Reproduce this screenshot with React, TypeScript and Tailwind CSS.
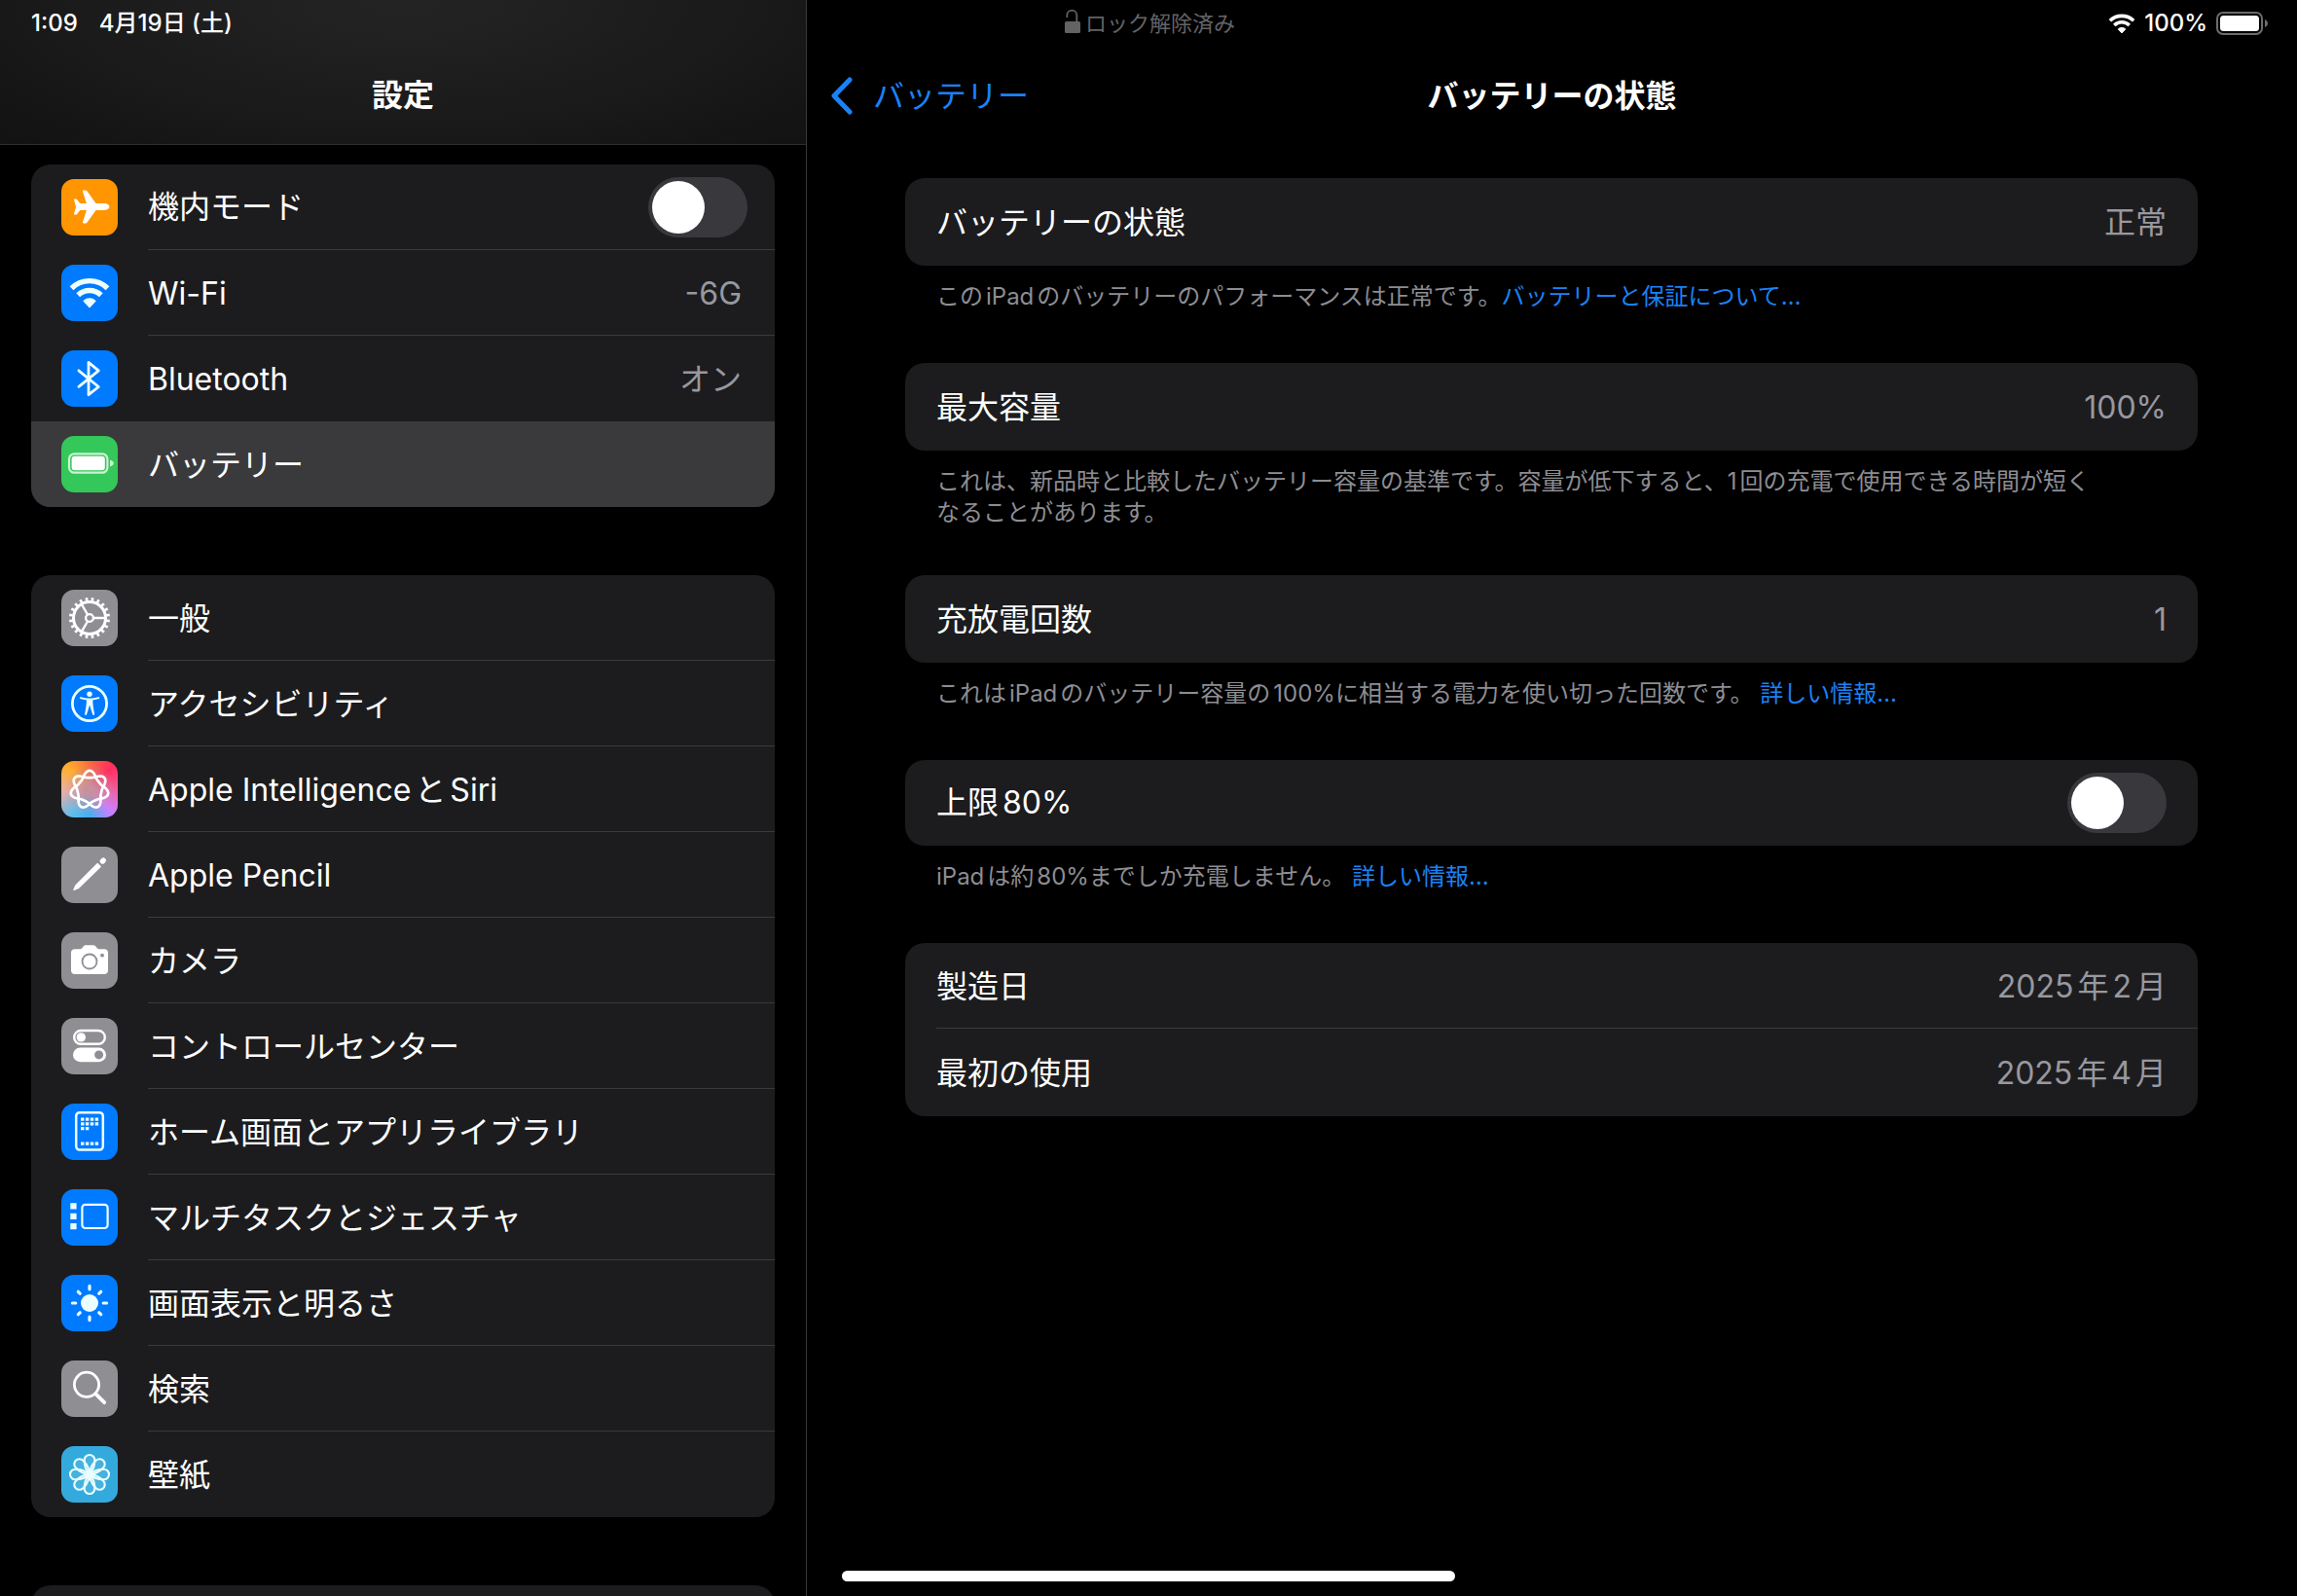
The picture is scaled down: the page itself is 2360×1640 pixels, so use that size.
import React, { useState } from 'react';

type IconProps = { className?: string };

type MenuItem = {
    label: string;
    tile: string;
    icon: React.ReactNode;
    value?: string;
};

// closed loop with seven petals, two turns round the centre
const siriPath =
    Array.from({ length: 241 }, (_, i) => {
        const t = (i / 240) * Math.PI * 4;
        const r = 15.3 + 3.6 * Math.cos(3.5 * t) + 0.7 * Math.cos(7 * t);
        const x = 29 + r * Math.sin(t);
        const y = 29.5 - r * Math.cos(t);
        return `${i === 0 ? 'M' : 'L'}${x.toFixed(2)} ${y.toFixed(2)}`;
    }).join('') + 'Z';

const Glyph: React.FC<{ children: React.ReactNode }> = ({ children }) => (
    <svg viewBox="0 0 58 58" fill="none" className="size-full" aria-hidden="true">
        {children}
    </svg>
);

const WifiShape: React.FC = () => (
    <>
        <path d="M10.5 24.2A26.4 26.4 0 0 1 47.5 24.2" stroke="currentColor" strokeWidth="5.4" />
        <path d="M17.2 31.2A17 17 0 0 1 40.8 31.2" stroke="currentColor" strokeWidth="5.4" />
        <path d="M29 43.4L23.2 37.2A8.6 8.6 0 0 1 34.8 37.2Z" fill="currentColor" stroke="currentColor" strokeWidth="1.4" strokeLinejoin="round" />
    </>
);

const icons = {
    airplane: (
        <Glyph>
            <path
                fill="currentColor"
                d="M49.4 28.5c0-2-2.5-3.4-5.5-3.4h-8.4L26.6 12.6c-.5-.7-1-1-1.8-1h-2c-.7 0-1 .5-.8 1.1l3.9 12.4h-6.6l-3.2-4.1c-.3-.4-.7-.6-1.2-.6h-1.2c-.6 0-.9.4-.7.9l2.1 7.2-2.1 7.2c-.2.5.1.9.7.9h1.2c.5 0 .9-.2 1.2-.6l3.2-4.1h6.6L22 44.3c-.2.6.1 1.1.8 1.1h2c.8 0 1.3-.3 1.8-1l8.9-12.5h8.4c3 0 5.5-1.4 5.5-3.4z"
            />
        </Glyph>
    ),
    wifi: (
        <Glyph>
            <WifiShape />
        </Glyph>
    ),
    bluetooth: (
        <Glyph>
            <path d="M17.9 20.8L38.3 37.5L28 45.7V12.3L38.3 20.8L17.9 37.3" stroke="currentColor" strokeWidth="2.8" strokeLinecap="round" strokeLinejoin="round" />
        </Glyph>
    ),
    battery: (
        <Glyph>
            <rect x="8" y="18.3" width="39.4" height="19.4" rx="5.4" stroke="currentColor" strokeOpacity="0.75" strokeWidth="2.2" />
            <rect x="10.6" y="20.8" width="34.2" height="14.4" rx="3.2" fill="currentColor" />
            <path d="M50 24.8v6.6c2.4-.5 3.9-1.7 3.9-3.3s-1.5-2.8-3.9-3.3z" fill="currentColor" fillOpacity="0.75" />
        </Glyph>
    ),
    gear: (
        <Glyph>
            <circle cx="29" cy="29" r="19" stroke="currentColor" strokeWidth="4" pathLength={200} strokeDasharray="4.4 5.6" strokeDashoffset="-2.8" />
            <circle cx="29" cy="29" r="16.5" stroke="currentColor" strokeWidth="3" />
            <circle cx="29" cy="29" r="3.9" stroke="currentColor" strokeWidth="2.4" />
            <path d="M33 29H45.5M27 25.5L20.8 14.8M27 32.5L20.8 43.2" stroke="currentColor" strokeWidth="2.4" />
        </Glyph>
    ),
    accessibility: (
        <Glyph>
            <circle cx="29" cy="29" r="17.6" stroke="currentColor" strokeWidth="2.8" />
            <circle cx="29" cy="19.2" r="2.7" fill="currentColor" />
            <path
                fill="currentColor"
                d="M19.8 22.2c3 .9 6 1.3 9.2 1.3s6.2-.4 9.2-1.3c1.2-.3 1.6 1.3.5 1.7-2 .6-4 1-5.9 1.3-.3 0-.5.3-.5.6 0 4 .6 8 1.8 13.6.3 1.6-1.5 2-2 .6l-3-9.5-3 9.5c-.5 1.4-2.3 1-2-.6 1.2-5.6 1.8-9.6 1.8-13.6 0-.3-.2-.6-.5-.6-2-.3-3.9-.7-5.9-1.3-1.1-.4-.7-2 .3-1.7z"
            />
        </Glyph>
    ),
    siri: (
        <Glyph>
            <path d={siriPath} stroke="currentColor" strokeWidth="2.7" strokeLinejoin="round" />
        </Glyph>
    ),
    pencil: (
        <Glyph>
            <path d="M12.8 44.4L15 39.6L37.2 17.5L40.2 20.5L17.8 42.4Z" fill="currentColor" stroke="currentColor" strokeWidth="1.2" strokeLinejoin="round" />
            <path d="M42.4 15L43.2 14.2" stroke="currentColor" strokeWidth="5.4" strokeLinecap="round" />
        </Glyph>
    ),
    camera: (
        <Glyph>
            <path
                fill="currentColor"
                d="M14 17.3h5.2c.9 0 1.5-.3 2.1-1l1.3-1.7c.8-1 1.6-1.4 2.8-1.4h7.2c1.2 0 2 .4 2.8 1.4l1.3 1.7c.6.7 1.2 1 2.1 1H44c2.6 0 4 1.4 4 4v17.7c0 2.6-1.4 4-4 4H14c-2.6 0-4-1.4-4-4V21.3c0-2.6 1.4-4 4-4z"
            />
            <circle cx="29" cy="30" r="7.5" stroke="#8e8e93" strokeWidth="1.8" />
            <circle cx="42" cy="23.7" r="1.9" fill="#8e8e93" />
        </Glyph>
    ),
    controls: (
        <Glyph>
            <rect x="13.2" y="13" width="31.6" height="13.8" rx="6.9" stroke="currentColor" strokeWidth="2.4" />
            <circle cx="20.3" cy="19.9" r="4.7" fill="currentColor" />
            <rect x="12" y="30.6" width="34" height="14.6" rx="7.3" fill="currentColor" />
            <circle cx="38.6" cy="37.9" r="4.5" fill="#8e8e93" />
        </Glyph>
    ),
    home: (
        <Glyph>
            <rect x="15.2" y="9.2" width="27.6" height="38.4" rx="3.6" stroke="currentColor" strokeWidth="2.5" />
            <path d="M20 16.2H38.1M20 20.9H38.1M20 25.6H28.5M20 41.2H38.1" stroke="currentColor" strokeWidth="3.3" strokeDasharray="3.4 1.5" />
        </Glyph>
    ),
    multitask: (
        <Glyph>
            <path d="M9.3 14.3h6.3v6.3h-6.3zM9.3 24.7h6.3v6.3h-6.3zM9.3 35h6.3v6.3h-6.3z" fill="currentColor" />
            <rect x="21.4" y="15.8" width="26.2" height="24.2" rx="3.2" stroke="currentColor" strokeWidth="2.2" />
        </Glyph>
    ),
    sun: (
        <Glyph>
            <circle cx="29" cy="29" r="9" fill="currentColor" />
            <path
                d="M29 11.4V14.8M29 43.2V46.6M11.4 29H14.8M43.2 29H46.6M17.3 17.3L19.2 19.2M38.8 38.8L40.7 40.7M17.3 40.7L19.2 38.8M38.8 19.2L40.7 17.3"
                stroke="currentColor"
                strokeWidth="3.2"
                strokeLinecap="round"
            />
        </Glyph>
    ),
    search: (
        <Glyph>
            <circle cx="26" cy="24.8" r="12.6" stroke="currentColor" strokeWidth="2.8" />
            <path d="M35.6 34.6L44.2 43.2" stroke="currentColor" strokeWidth="3.8" strokeLinecap="round" />
        </Glyph>
    ),
    flower: (
        <Glyph>
            {[0, 45, 90, 135, 180, 225, 270, 315].map((angle) => (
                <path
                    key={angle}
                    transform={`rotate(${angle} 29 29)`}
                    d="M29 28.5C25 25 23.7 18 23.7 14.3a5.3 5.3 0 0 1 10.6 0C34.3 18 33 25 29 28.5Z"
                    fill="currentColor"
                    fillOpacity="0.1"
                    stroke="currentColor"
                    strokeWidth="2.1"
                />
            ))}
        </Glyph>
    ),
};

const connectionItems: MenuItem[] = [
    { label: 'Wi-Fi', tile: 'bg-[#007aff] text-[#ecffff]', icon: icons.wifi, value: '-6G' },
    { label: 'Bluetooth', tile: 'bg-[#007aff] text-[#ecffff]', icon: icons.bluetooth, value: 'オン' },
    { label: 'バッテリー', tile: 'bg-[#34c759] text-white', icon: icons.battery },
];

const generalItems: MenuItem[] = [
    { label: '一般', tile: 'bg-[#8e8e93] text-white', icon: icons.gear },
    { label: 'アクセシビリティ', tile: 'bg-[#007aff] text-[#ecffff]', icon: icons.accessibility },
    {
        label: 'Apple IntelligenceとSiri',
        tile: 'bg-[radial-gradient(circle,#c98f9c_10%,transparent_65%),conic-gradient(#fb6a3a,#ff2d5f_45deg,#f060a8_95deg,#cc80ff_135deg,#3fb0f5_180deg,#62bdea_215deg,#e8b0a8_265deg,#ffb02e_315deg,#fb6a3a)] text-white',
        icon: icons.siri,
    },
    { label: 'Apple Pencil', tile: 'bg-[#8e8e93] text-white', icon: icons.pencil },
    { label: 'カメラ', tile: 'bg-[#8e8e93] text-white', icon: icons.camera },
    { label: 'コントロールセンター', tile: 'bg-[#8e8e93] text-white', icon: icons.controls },
    { label: 'ホーム画面とアプリライブラリ', tile: 'bg-[#007aff] text-[#ecffff]', icon: icons.home },
    { label: 'マルチタスクとジェスチャ', tile: 'bg-[#007aff] text-[#ecffff]', icon: icons.multitask },
    { label: '画面表示と明るさ', tile: 'bg-[#007aff] text-[#ecffff]', icon: icons.sun },
    { label: '検索', tile: 'bg-[#8e8e93] text-white', icon: icons.search },
    { label: '壁紙', tile: 'bg-[#34aadc] text-[#ecffff]', icon: icons.flower },
];

const Tile: React.FC<{ tile: string; children: React.ReactNode }> = ({ tile, children }) => (
    <span className={`size-[58px] shrink-0 rounded-[13px] ${tile}`}>{children}</span>
);

const Switch: React.FC<{ id: string }> = ({ id }) => {
    const [on, setOn] = useState(false);

    return (
        <input
            id={id}
            type="checkbox"
            role="switch"
            checked={on}
            onChange={(e) => setOn(e.target.checked)}
            className="flex h-[62px] w-[102px] shrink-0 cursor-pointer appearance-none items-center rounded-full bg-[#39393d] px-1 before:block before:size-[54px] before:rounded-full before:bg-white checked:justify-end checked:bg-[#30d158]"
        />
    );
};

const MenuRow: React.FC<{ item: MenuItem; selected: boolean; divider: boolean; onSelect: () => void }> = ({ item, selected, divider, onSelect }) => (
    <button
        type="button"
        onClick={onSelect}
        aria-current={selected ? 'page' : undefined}
        className={`flex w-full items-center gap-[31px] pl-[31px] text-left ${selected ? 'bg-[#3a3a3c]' : ''}`}
    >
        <Tile tile={item.tile}>{item.icon}</Tile>
        <span className={`flex h-[88px] flex-1 items-center justify-between border-b pt-0.5 pr-[34px] ${divider ? 'border-[#3a3a3c]' : 'border-transparent'}`}>
            <span>{item.label}</span>
            {item.value && <span className="text-[#98989f]">{item.value}</span>}
        </span>
    </button>
);

const Sidebar: React.FC = () => {
    const [selected, setSelected] = useState('バッテリー');

    const renderRows = (items: MenuItem[]) =>
        items.map((item, i) => {
            const next = items[i + 1];
            return (
                <MenuRow
                    key={item.label}
                    item={item}
                    selected={item.label === selected}
                    divider={!!next && next.label !== selected && item.label !== selected}
                    onSelect={() => setSelected(item.label)}
                />
            );
        });

    return (
        <aside className="flex w-[829px] shrink-0 flex-col overflow-hidden border-r border-[#38383a]">
            <header className="flex h-[149px] shrink-0 items-end justify-center border-b border-[#2e2e30] bg-[radial-gradient(ellipse_at_top,#242424_0%,#1b1b1b_55%,#121212_100%)] pb-7">
                <h1 className="font-bold leading-[44px]">設定</h1>
            </header>
            <nav className="flex flex-col gap-[70px] px-8 pt-5">
                <div className="overflow-hidden rounded-[20px] bg-[#1c1c1e]">
                    <div className="flex items-center gap-[31px] pl-[31px]">
                        <Tile tile="bg-[#ff9500] text-white">{icons.airplane}</Tile>
                        <label htmlFor="airplane" className="flex h-[88px] flex-1 items-center justify-between border-b border-[#3a3a3c] pr-7">
                            機内モード
                            <Switch id="airplane" />
                        </label>
                    </div>
                    {renderRows(connectionItems)}
                </div>
                <div className="overflow-hidden rounded-[20px] bg-[#1c1c1e]">{renderRows(generalItems)}</div>
                <div className="h-[88px] rounded-[20px] bg-[#1c1c1e]" />
            </nav>
        </aside>
    );
};

const Card: React.FC<{ children: React.ReactNode }> = ({ children }) => (
    <div className="rounded-[20px] bg-[#1c1c1e] pl-8">{children}</div>
);

const InfoRow: React.FC<{ label: string; value: string; divider?: boolean }> = ({ label, value, divider }) => (
    <div className={`flex items-center justify-between pt-0.5 pr-8 ${divider ? 'h-[88px] border-b border-[#3a3a3c]' : 'h-[90px]'}`}>
        <span>{label}</span>
        <span className="text-[#98989f]">{value}</span>
    </div>
);

const Note: React.FC<{ children: React.ReactNode }> = ({ children }) => (
    <p className="px-8 pt-4 text-[24px] leading-8 text-[#8d8d93]">{children}</p>
);

const NoteLink: React.FC<{ children: React.ReactNode }> = ({ children }) => (
    <a href="#" className="text-[#1a82f7]">
        {children}
    </a>
);

const BatteryHealth: React.FC = () => (
    <main className="flex min-w-0 flex-1 flex-col">
        <header className="grid h-[149px] shrink-0 grid-cols-[1fr_auto_1fr] items-end px-6 pb-7 leading-[44px]">
            <button type="button" className="flex items-center gap-5 justify-self-start text-[#1a82f7]">
                <svg viewBox="0 0 24 40" fill="none" className="h-10 w-6" aria-hidden="true">
                    <path d="M20 3L4 19.5L20 36" stroke="currentColor" strokeWidth="5" strokeLinecap="round" strokeLinejoin="round" />
                </svg>
                バッテリー
            </button>
            <h2 className="font-bold">バッテリーの状態</h2>
        </header>
        <div className="flex flex-col pt-[34px] pr-[102px] pl-[101px]">
            <section className="mb-[52px]">
                <Card>
                    <InfoRow label="バッテリーの状態" value="正常" />
                </Card>
                <Note>
                    このiPadのバッテリーのパフォーマンスは正常です。<NoteLink>バッテリーと保証について…</NoteLink>
                </Note>
            </section>
            <section className="mb-12">
                <Card>
                    <InfoRow label="最大容量" value="100%" />
                </Card>
                <Note>
                    これは、新品時と比較したバッテリー容量の基準です。容量が低下すると、1回の充電で使用できる時間が短く
                    <span className="inline-block">なることがあります。</span>
                </Note>
            </section>
            <section className="mb-[52px]">
                <Card>
                    <InfoRow label="充放電回数" value="1" />
                </Card>
                <Note>
                    これはiPadのバッテリー容量の100%に相当する電力を使い切った回数です。 <NoteLink>詳しい情報…</NoteLink>
                </Note>
            </section>
            <section className="mb-[52px]">
                <Card>
                    <label htmlFor="limit" className="flex h-[88px] items-center justify-between pr-8">
                        上限80%
                        <Switch id="limit" />
                    </label>
                </Card>
                <Note>
                    iPadは約80%までしか充電しません。 <NoteLink>詳しい情報…</NoteLink>
                </Note>
            </section>
            <Card>
                <InfoRow label="製造日" value="2025年2月" divider />
                <InfoRow label="最初の使用" value="2025年4月" />
            </Card>
        </div>
    </main>
);

const LockOpenIcon: React.FC<IconProps> = ({ className }) => (
    <svg viewBox="0 0 18 26" fill="none" className={className} aria-hidden="true">
        <rect x="1" y="13" width="16" height="12" rx="1.5" fill="currentColor" />
        <path d="M3.3 9V6.6a5 5 0 0 1 10 0V14" stroke="currentColor" strokeWidth="1.8" />
    </svg>
);

const StatusBar: React.FC = () => (
    <div className="absolute inset-x-0 top-0 grid h-12 grid-cols-[1fr_auto_1fr] items-center pr-[30px] pl-8 text-[24px] font-medium">
        <div className="flex items-center gap-[22px] [text-autospace:no-autospace]">
            <span>1:09</span>
            <span>4月19日 (土)</span>
        </div>
        <div className="flex items-center gap-1 text-[22px] font-normal text-[#636366]">
            <LockOpenIcon className="mb-1 h-[26px] w-[18px]" />
            ロック解除済み
        </div>
        <div className="flex items-center gap-[9px] justify-self-end">
            <svg viewBox="8 13 42 32" fill="none" className="h-[21px] w-7" aria-hidden="true">
                <WifiShape />
            </svg>
            <span>100%</span>
            <svg viewBox="0 0 53 24" fill="none" className="h-6 w-[53px]" aria-hidden="true">
                <rect x="1" y="1" width="46" height="22" rx="6" stroke="#6c6c6e" strokeWidth="2" />
                <rect x="4" y="4" width="40" height="16" rx="3.5" fill="#fff" />
                <path d="M50 8v8c1.9-.8 3-2.3 3-4s-1.1-3.2-3-4z" fill="#6c6c6e" />
            </svg>
        </div>
    </div>
);

const App: React.FC = () => {
    return (
        <div
            lang="ja"
            className="relative flex h-screen overflow-hidden bg-black font-['Inter','Noto_Sans_CJK_JP',sans-serif] text-[32px] leading-none text-white [text-autospace:normal]"
        >
            <Sidebar />
            <BatteryHealth />
            <StatusBar />
            <div className="absolute bottom-[15px] left-1/2 h-[11px] w-[630px] -translate-x-1/2 rounded-full bg-white" />
        </div>
    );
};

export default App;
